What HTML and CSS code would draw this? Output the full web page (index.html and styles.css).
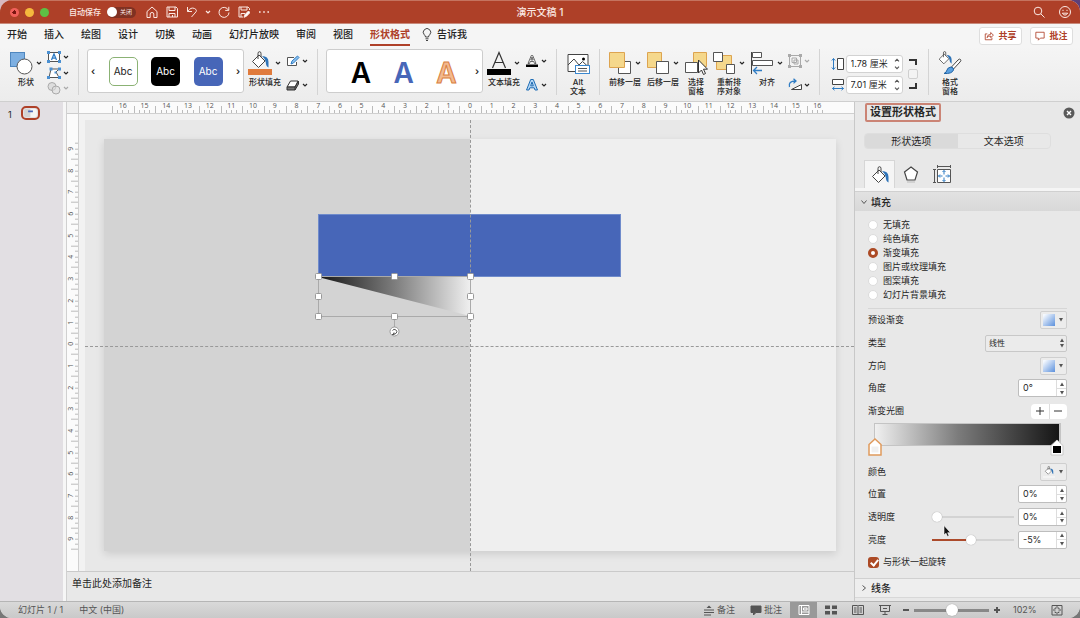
FILE: index.html
```html
<!DOCTYPE html>
<html lang="zh-CN">

<head>
  <meta charset="UTF-8">
  <meta name="viewport" content="width=device-width, initial-scale=1.0">
  <title>演示文稿 1</title>
  <link rel="stylesheet" href="styles.css">
</head>

<body>
  <!-- 公用图标 -->
  <svg class="sprite" aria-hidden="true">
    <symbol id="chev" viewBox="0 0 8 8"><path d="M2 3l2 2 2-2" fill="none" stroke="currentColor" stroke-width="1.2" /></symbol>
    <symbol id="up" viewBox="0 0 6 4"><path d="M1 4l2-3.500L5 4z" fill="currentColor" /></symbol>
    <symbol id="down" viewBox="0 0 6 4"><path d="M1 0l2 3.500L5 0z" fill="currentColor" /></symbol>
    <symbol id="cup" viewBox="0 0 6 4"><path d="M1 3.4l2-2 2 2" fill="none" stroke="currentColor" stroke-width="1.1" /></symbol>
    <symbol id="cdown" viewBox="0 0 6 4"><path d="M1 .6l2 2 2-2" fill="none" stroke="currentColor" stroke-width="1.1" /></symbol>
    <symbol id="bucket" viewBox="0 0 18 18">
      <path d="M1.500 10.500L8 4l6 6-6.500 6.500z" fill="#fff" stroke="#444" />
      <path d="M7 8V2.500q0-1.800 1.500-1.800T10 2.500V6" fill="none" stroke="#444" />
      <path d="M11 5q6.500 0 6.500 6v5.500q-2.500-1-2.800-5.500-.7-3.500-3.700-6z" fill="#2f74b8" />
    </symbol>
    <symbol id="gradfill" viewBox="0 0 12 12"><rect width="12" height="12" fill="url(#blueGrad)" /></symbol>
    <linearGradient id="blueGrad" x1="0" y1="0" x2="1" y2="1">
      <stop offset=".1" stop-color="#f4f8fe" /><stop offset="1" stop-color="#5b90dc" />
    </linearGradient>
    <linearGradient id="shapeGrad">
      <stop offset="0" stop-color="#151515" /><stop offset=".5" stop-color="#7c7c7c" /><stop offset="1" stop-color="#efefef" />
    </linearGradient>
  </svg>

  <div class="window">
    <header class="titlebar">
      <div class="title-left">
        <div class="lights"><i class="red"></i><i class="yellow"></i><i class="green"></i></div>
        <span class="autosave">自动保存</span>
        <button class="toggle" aria-label="自动保存"><i></i>关闭</button>
        <svg class="t-icon" viewBox="0 0 12 12"><path d="M1 5.500L6 1l5 4.500V11.500H7.800V8Q7.800 6.500 6 6.500T4.200 8v3.500H1z" /></svg>
        <svg class="t-icon" viewBox="0 0 12 12"><path d="M1 1h9l1.500 1.500V11H1zM3 1v3.500h6V1M3 11V7.500h6V11M6.500 9v2" /></svg>
        <svg class="t-icon" viewBox="0 0 12 12"><path d="M1.500 1v4.500H6M1.500 5.500Q5 .8 8.500 2.500T9 7L5.500 11" /></svg>
        <svg class="t-chev"><use href="#chev" /></svg>
        <svg class="t-icon" viewBox="0 0 12 12"><path d="M10.500 4.200A5 5 0 1 0 11 6.500M10.800.8v3.600H7.200" /></svg>
        <svg class="t-icon" viewBox="0 0 12 12"><path d="M5 11H1V1h9l1.500 1.500V4M3 1v3h6V1M3 11V7.500h4" /><path d="M6 11.300L7 8.500l3.500-3.500 1.500 1.500L8.500 10.200z" fill="#fff" /></svg>
        <svg class="t-icon" viewBox="0 0 12 12"><path d="M1 6h1.600M5.200 6h1.600M9.400 6H11" stroke-width="1.600" /></svg>
      </div>
      <h1>演示文稿 1</h1>
      <div class="title-right">
        <svg class="t-icon" viewBox="0 0 12 12"><circle cx="5" cy="5" r="3.800" /><path d="M7.800 7.800L11.500 11.500" /></svg>
        <svg class="t-icon" viewBox="0 0 12 12"><circle cx="6" cy="6" r="5.500" /><path d="M3.300 7.200Q6 11 8.700 7.200zM4 3.800v1.200M8 3.800v1.200" /></svg>
      </div>
    </header>

    <nav class="tabs">
      <a href="#">开始</a>
      <a href="#">插入</a>
      <a href="#">绘图</a>
      <a href="#">设计</a>
      <a href="#">切换</a>
      <a href="#">动画</a>
      <a href="#">幻灯片放映</a>
      <a href="#">审阅</a>
      <a href="#">视图</a>
      <a href="#" class="active">形状格式</a>
      <a href="#" class="tell"><svg viewBox="0 0 10 13"><path d="M3.500 9Q3.500 7.800 2.300 6.800A3.700 3.700 0 1 1 7.700 6.800Q6.500 7.800 6.500 9zM3.500 10.800h3M4 12.500h2" /></svg>告诉我</a>
      <div class="tab-actions">
        <button><svg viewBox="0 0 12 12"><path d="M4 3.500H1.500v7h8V8M3.500 8Q4 4 8 4V1.800L11.300 5 8 8V6Q5 6 3.500 8z" /></svg>共享</button>
        <button><svg viewBox="0 0 12 12"><path d="M1 1.500h10v7H6.500L4 11V8.500H1z" /></svg>批注</button>
      </div>
    </nav>

    <div class="ribbon">
      <button class="tool">
        <span class="pic"><svg viewBox="0 0 24 24"><rect x="1.500" y="1.500" width="14" height="14" fill="#7eb0e2" stroke="#4f87bf" /><circle cx="15.500" cy="15.500" r="7.500" fill="#fff" stroke="#555" /></svg><svg class="chev"><use href="#chev" /></svg></span>
        <span>形状</span>
      </button>
      <div class="stack three">
        <button aria-label="文本框"><svg viewBox="0 0 14 14"><rect x="1.500" y="2.500" width="11" height="9" fill="#fff" stroke="#555" /><path d="M4.500 10L7 4l2.500 6M5.500 8.200h3" fill="none" stroke="#2f7cc4" stroke-width="1.300" /><path d="M0 1h3v3H0zM11 1h3v3h-3zM0 10h3v3H0zM11 10h3v3h-3z" fill="#4a90d2" /></svg><svg class="chev"><use href="#chev" /></svg></button>
        <button aria-label="编辑形状"><svg viewBox="0 0 14 14"><path d="M4 3h8L9 6l3 5.500H2z" fill="#fff" stroke="#555" /><path d="M2.500 1.500h3v3h-3zM11 1.500h3v3h-3zM0 10h3v3H0zM11 10h3v3h-3zM7.500 5.500h2v2h-2z" fill="#4a90d2" /></svg><svg class="chev"><use href="#chev" /></svg></button>
        <button class="off" aria-label="合并形状" disabled><svg viewBox="0 0 14 14"><circle cx="5" cy="5.500" r="4" fill="#ddd" stroke="#aaa" /><circle cx="9" cy="9" r="4" fill="#ddd" fill-opacity=".6" stroke="#aaa" /></svg><svg class="chev"><use href="#chev" /></svg></button>
      </div>
      <i class="divider"></i>

      <div class="gallery">
        <button class="arrow" aria-label="上一个">‹</button>
        <button class="style-tile outline">Abc</button>
        <button class="style-tile black">Abc</button>
        <button class="style-tile blue">Abc</button>
        <button class="arrow" aria-label="下一个">›</button>
      </div>
      <button class="tool">
        <span class="pic"><svg viewBox="0 0 24 24"><use href="#bucket" x="3" y="0" width="18" height="18" /><path d="M0 18h24v6H0z" fill="#e07b3c" /></svg><svg class="chev"><use href="#chev" /></svg></span>
        <span>形状填充</span>
      </button>
      <div class="stack">
        <button aria-label="形状轮廓"><svg viewBox="0 0 14 14"><path d="M8 3.500H1.500v8h9V8" fill="#fff" stroke="#555" /><path d="M5 10l1-3 5.500-5L13 3.500 7.500 9z" fill="#8cc1ee" stroke="#2f7cc4" /></svg><svg class="chev"><use href="#chev" /></svg></button>
        <button aria-label="形状效果"><svg viewBox="0 0 14 14"><path d="M1 9l3.500-6H12L9 9z" fill="#fff" stroke="#333" /><path d="M1 9v3h8l3.500-6V3L9 9H1M9 9v3" fill="#777" stroke="#333" /></svg><svg class="chev"><use href="#chev" /></svg></button>
      </div>
      <i class="divider"></i>

      <div class="gallery wordart">
        <button class="wa">A</button>
        <button class="wa wa-blue">A</button>
        <button class="wa wa-orange">A</button>
        <button class="arrow" aria-label="下一个">›</button>
      </div>
      <button class="tool">
        <span class="pic"><svg viewBox="0 0 24 24"><path d="M5.500 17L12 1.500 18.500 17M8 11.500h8" fill="none" stroke="#333" stroke-width="1.200" /><path d="M0 18h24v6H0z" /></svg><svg class="chev"><use href="#chev" /></svg></span>
        <span>文本填充</span>
      </button>
      <div class="stack">
        <button aria-label="文本轮廓"><svg viewBox="0 0 14 14"><path d="M3 9.500L6.300 1.500h1.400L11 9.500H9.500L8.800 7.500H5.200l-.7 2zM5.800 6h2.400L7 3z" fill="#fff" stroke="#444" stroke-width=".8" /><path d="M1 10.500h12v2.500H1z" /></svg><svg class="chev"><use href="#chev" /></svg></button>
        <button aria-label="文字效果"><svg viewBox="0 0 14 14"><path d="M1.500 12L5.700 1.500h2.600L12.500 12H10L9.200 9.800H4.800L4 12zM5.700 7.800h2.600L7 4z" fill="#b5d7f5" stroke="#1f6db5" /></svg><svg class="chev"><use href="#chev" /></svg></button>
      </div>
      <i class="divider"></i>

      <button class="tool narrow">
        <span class="pic"><svg viewBox="0 0 24 24"><path d="M2 3.500h20v17H2z" fill="#fff" stroke="#444" /><path d="M2 14l6-6 5 6 3.500-3.500 5.500 5" fill="none" stroke="#444" /><circle cx="17.500" cy="8" r="1.500" /><rect x="9.500" y="14.500" width="14" height="8" fill="#fff" stroke="#3b88cf" /><path d="M12 17.500h9M12 20h9" stroke="#555" /></svg></span>
        <span>Alt<br>文本</span>
      </button>
      <i class="divider"></i>

      <button class="tool">
        <span class="pic"><svg viewBox="0 0 24 24"><path d="M10.500 10.500h12v12h-12z" fill="#fff" stroke="#555" /><path d="M1.500 1.500h15v15h-15z" fill="#f5d88c" stroke="#dda450" /></svg><svg class="chev"><use href="#chev" /></svg></span>
        <span>前移一层</span>
      </button>
      <button class="tool">
        <span class="pic"><svg viewBox="0 0 24 24"><path d="M1.500 1.500h14v15h-14z" fill="#f5d88c" stroke="#dda450" /><path d="M10.500 10.500h12v12h-12z" fill="#fff" stroke="#555" /></svg><svg class="chev"><use href="#chev" /></svg></span>
        <span>后移一层</span>
      </button>
      <button class="tool slim">
        <span class="pic"><svg viewBox="0 0 24 24"><path d="M9.500 1.500h13v14h-13z" fill="#f5d88c" stroke="#dda450" /><path d="M1.500 11.500h12v10h-12z" fill="#fff" stroke="#555" /><path d="M14.500 9v13l3-3 2 4.500 2-1-2-4.300h4z" fill="#fff" stroke="#333" /></svg></span>
        <span>选择<br>窗格</span>
      </button>
      <button class="tool">
        <span class="pic"><svg viewBox="0 0 24 24"><path d="M4.500 4.500h15v14h-15z" fill="#f5d88c" stroke="#dda450" /><path d="M1.500 1.500h9v9h-9zM14.500 13.500h8v9h-8z" fill="#fff" stroke="#555" /></svg><svg class="chev"><use href="#chev" /></svg></span>
        <span>重新排<br>序对象</span>
      </button>
      <button class="tool">
        <span class="pic"><svg viewBox="0 0 24 24"><path d="M1.500 1v22" stroke="#444" /><path d="M2.500 1.500h9v5h-9zM2.500 9.500h20v5h-20z" fill="#fff" stroke="#555" /><path d="M12 19.500H3.500M7 16l-3.500 3.500L7 23" fill="none" stroke="#2f7cc4" stroke-width="1.300" /></svg><svg class="chev"><use href="#chev" /></svg></span>
        <span>对齐</span>
      </button>
      <div class="stack">
        <button class="off" aria-label="组合" disabled><svg viewBox="0 0 14 14"><path d="M1.500 1.500h11v11h-11zM4 4h4.500v4.500H4zM6 6h4v4H6z" fill="none" stroke="#aaa" /><path d="M0 0h3v3H0zM11 0h3v3h-3zM0 11h3v3H0zM11 11h3v3h-3z" fill="#aaa" /></svg><svg class="chev"><use href="#chev" /></svg></button>
        <button aria-label="旋转"><svg viewBox="0 0 14 14"><path d="M3.500 11.500h10v-5z" fill="#fff" stroke="#444" /><path d="M1.500 9Q0 3 7.500 3M5.500.8L8 3 5.500 5.400" fill="none" stroke="#2f7cc4" stroke-width="1.300" /></svg><svg class="chev"><use href="#chev" /></svg></button>
      </div>
      <i class="divider"></i>

      <div class="size">
        <div class="size-fields">
          <label for="shapeH" aria-label="高度"><svg viewBox="0 0 14 14"><path d="M6.500 1.500h6v11h-6z" fill="#fff" stroke="#444" /><path d="M2.500 1.500v11M.8 3.500l1.700-2 1.700 2M.8 10.500l1.700 2 1.700-2" fill="none" stroke="#2f7cc4" /></svg></label>
          <div class="size-box"><input id="shapeH" type="text" value="1.78 厘米"><span class="steps"><button aria-label="增加"><svg><use href="#cup" /></svg></button><button aria-label="减少"><svg><use href="#cdown" /></svg></button></span></div>
          <label for="shapeW" aria-label="宽度"><svg viewBox="0 0 14 14"><path d="M1.500 1.500h11v5h-11z" fill="#fff" stroke="#444" /><path d="M1.500 10.500h11M3.500 8.800l-2 1.700 2 1.700M10.500 8.800l2 1.700-2 1.700" fill="none" stroke="#2f7cc4" /></svg></label>
          <div class="size-box"><input id="shapeW" type="text" value="7.01 厘米"><span class="steps"><button aria-label="增加"><svg><use href="#cup" /></svg></button><button aria-label="减少"><svg><use href="#cdown" /></svg></button></span></div>
        </div>
        <div class="lock">
          <svg viewBox="0 0 8 6"><path d="M0 1h7v5" /></svg>
          <input type="checkbox" aria-label="锁定纵横比">
          <svg viewBox="0 0 8 6"><path d="M0 5h7V0" /></svg>
        </div>
      </div>
      <i class="divider"></i>

      <button class="tool narrow">
        <span class="pic"><svg viewBox="0 0 24 24"><use href="#bucket" x="0" y="0" width="14" height="14" /><path d="M22.500 8.500q1 1-.5 2.500l-6.500 7-2-2L20 9q1.500-1.500 2.500-.5z" fill="#fff" stroke="#444" /><path d="M13 16q3 .5 2.500 3-1.500 4-9.500 3.500 2.500-1 3-3.500T13 16z" fill="#5aa0e0" stroke="#2465a5" /></svg></span>
        <span>格式<br>窗格</span>
      </button>
    </div>

    <main class="body">
      <aside class="thumbs">
        <span>1</span>
        <button class="thumb" aria-label="幻灯片 1"><svg viewBox="0 0 16 10"><path d="M0 0h8v10H0z" fill="#d3d3d3" /><path d="M8 0h8v10H8z" fill="#f5f5f5" /><path d="M5 2h6v2H5z" fill="#4766b8" /></svg></button>
      </aside>

      <section class="editor">
        <div class="workspace">
          <div class="corner"></div>
          <div class="ruler-h">
            <span>16</span><span>15</span><span>14</span><span>13</span><span>12</span><span>11</span><span>10</span><span>9</span><span>8</span><span>7</span><span>6</span><span>5</span><span>4</span><span>3</span><span>2</span><span>1</span><span>0</span><span>1</span><span>2</span><span>3</span><span>4</span><span>5</span><span>6</span><span>7</span><span>8</span><span>9</span><span>10</span><span>11</span><span>12</span><span>13</span><span>14</span><span>15</span><span>16</span>
          </div>
          <div class="ruler-v">
            <span>9</span><span>8</span><span>7</span><span>6</span><span>5</span><span>4</span><span>3</span><span>2</span><span>1</span><span>0</span><span>1</span><span>2</span><span>3</span><span>4</span><span>5</span><span>6</span><span>7</span><span>8</span><span>9</span>
          </div>
          <div class="stage">
            <div class="canvas">
              <div class="slide">
                <svg viewBox="0 0 732 412">
                  <rect x="214.500" y="75.500" width="302" height="62" fill="#4766b8" stroke="#6f8bcb" />
                  <path d="M214 138h152v39z" fill="url(#shapeGrad)" />
                </svg>
              </div>
              <i class="guide-v"></i>
              <i class="guide-h"></i>
              <!-- 选中框 -->
              <div class="overlay">
                <svg viewBox="0 0 732 412">
                  <path d="M214.500 137.500h152v40h-152zM290.500 177v12" fill="none" stroke="#aaa" />
                  <g fill="#fff" stroke="#999">
                    <rect x="211.500" y="134.500" width="6" height="6" rx="1" /><rect x="287.500" y="134.500" width="6" height="6" rx="1" /><rect x="363.500" y="134.500" width="6" height="6" rx="1" />
                    <rect x="211.500" y="154.500" width="6" height="6" rx="1" /><rect x="363.500" y="154.500" width="6" height="6" rx="1" />
                    <rect x="211.500" y="174.500" width="6" height="6" rx="1" /><rect x="287.500" y="174.500" width="6" height="6" rx="1" /><rect x="363.500" y="174.500" width="6" height="6" rx="1" />
                    <circle cx="290.500" cy="192.500" r="4.500" />
                  </g>
                  <path d="M288.500 191.500a2.300 2.300 0 1 1 .5 3M288 195.500h2v-2" fill="none" stroke="#555" />
                </svg>
              </div>
            </div>
          </div>
        </div>
        <div class="notes">单击此处添加备注</div>
      </section>

      <aside class="pane">
        <div class="pane-title">
          <h2>设置形状格式</h2>
          <button class="close" aria-label="关闭"><svg viewBox="0 0 12 12"><circle cx="6" cy="6" r="5.500" fill="#5a5a5a" /><path d="M4 4l4 4M8 4L4 8" stroke="#fff" stroke-width="1.400" /></svg></button>
        </div>
        <div class="segments">
          <button class="on">形状选项</button>
          <button>文本选项</button>
        </div>
        <div class="pane-tabs">
          <button class="on" aria-label="填充与线条"><svg viewBox="0 0 18 18"><use href="#bucket" width="18" height="18" /></svg></button>
          <button aria-label="效果"><svg viewBox="0 0 18 18"><path d="M9 2l6.500 5L13 15H5L2.500 7z" fill="#fff" stroke="#444" stroke-width="1.200" /><path d="M5 17h8" stroke="#bbb" /></svg></button>
          <button aria-label="大小与属性"><svg viewBox="0 0 18 18"><path d="M4.500 4.500h13v13h-13z" fill="#fff" stroke="#555" /><path d="M4.500 1.500h13M4.500 0v3M17.500 0v3M1.500 4.500v13M0 4.500h3M0 17.500h3" stroke="#555" /><path d="M11 5.500v4M11 12.500v4M5.500 11h4M12.500 11h4M9.500 7L11 5.500 12.500 7M9.500 15l1.500 1.500 1.500-1.500M7 9.500L5.500 11 7 12.500M15 9.500l1.500 1.500-1.500 1.500" fill="none" stroke="#2f7cc4" /></svg></button>
        </div>

        <button class="section-head fill-head"><svg viewBox="0 0 8 8"><path d="M1.500 2.500L4 5.500l2.500-3" /></svg>填充</button>
        <div class="fill-body">
          <div class="radios">
            <label><input type="radio" name="fill">无填充</label>
            <label><input type="radio" name="fill">纯色填充</label>
            <label><input type="radio" name="fill" checked>渐变填充</label>
            <label><input type="radio" name="fill">图片或纹理填充</label>
            <label><input type="radio" name="fill">图案填充</label>
            <label><input type="radio" name="fill">幻灯片背景填充</label>
          </div>
          <div class="rows five">
            <div class="row"><span>预设渐变</span><button class="swatch" aria-label="预设渐变"><svg viewBox="0 0 12 12"><use href="#gradfill" /></svg><svg class="tri"><use href="#down" /></svg></button></div>
            <div class="row"><label for="gradType">类型</label><span class="select"><select id="gradType"><option>线性</option></select><span class="select-arrows"><svg class="tri"><use href="#up" /></svg><svg class="tri"><use href="#down" /></svg></span></span></div>
            <div class="row"><span>方向</span><button class="swatch" aria-label="方向"><svg viewBox="0 0 12 12"><use href="#gradfill" /></svg><svg class="tri"><use href="#down" /></svg></button></div>
            <div class="row"><label for="angle">角度</label><div class="spin"><input id="angle" type="text" value="0°"><span class="steps"><button aria-label="增加"><svg><use href="#up" /></svg></button><button aria-label="减少"><svg><use href="#down" /></svg></button></span></div></div>
            <div class="row"><span>渐变光圈</span><div class="plusminus"><button aria-label="添加光圈"><svg viewBox="0 0 8 8"><path d="M0 4h8M4 0v8" /></svg></button><button aria-label="删除光圈"><svg viewBox="0 0 8 8"><path d="M0 4h8" /></svg></button></div></div>
          </div>
          <div class="gradient">
            <div class="bar"></div>
            <svg class="stop first" viewBox="0 0 14 18"><path d="M1 6.500L7 1l6 5.500V17H1z" fill="#fff" stroke="#e09a5c" stroke-width="1.500" /><path d="M3.500 8.500h7v6h-7z" fill="#f0f0f0" /></svg>
            <svg class="stop last" viewBox="0 0 14 18"><path d="M1 7.500L7 2l6 5.500V17H1z" fill="#fff" stroke="#c8c8c8" /><path d="M3 8h8v7H3z" /></svg>
          </div>
          <div class="rows four">
            <div class="row"><span>颜色</span><button class="swatch" aria-label="颜色"><svg viewBox="0 0 12 12"><use href="#bucket" x="1" width="10" height="9" /><path d="M0 10h12v2H0z" fill="#f4f4f4" /></svg><svg class="tri"><use href="#down" /></svg></button></div>
            <div class="row"><label for="pos">位置</label><div class="spin"><input id="pos" type="text" value="0%"><span class="steps"><button aria-label="增加"><svg><use href="#up" /></svg></button><button aria-label="减少"><svg><use href="#down" /></svg></button></span></div></div>
            <div class="row"><label for="alpha">透明度</label><input class="slider" type="range" min="0" max="100" value="0" aria-label="透明度"><div class="spin"><input id="alpha" type="text" value="0%"><span class="steps"><button aria-label="增加"><svg><use href="#up" /></svg></button><button aria-label="减少"><svg><use href="#down" /></svg></button></span></div>
              <svg class="cursor" viewBox="0 0 8 12"><path d="M1 .5v9.500l2-1.800 1.500 3.300 1.500-.7L4.700 7.700h2.800z" fill="#111" stroke="#fff" stroke-width=".6" /></svg>
            </div>
            <div class="row"><label for="light">亮度</label><input class="slider light" type="range" min="-100" max="100" value="-5" aria-label="亮度"><div class="spin"><input id="light" type="text" value="-5%"><span class="steps"><button aria-label="增加"><svg><use href="#up" /></svg></button><button aria-label="减少"><svg><use href="#down" /></svg></button></span></div></div>
          </div>
          <label class="check"><input type="checkbox" checked>与形状一起旋转</label>
        </div>
        <button class="section-head line-head"><svg viewBox="0 0 8 8"><path d="M2.500 1.500L5.500 4l-3 2.500" /></svg>线条</button>
      </aside>
    </main>

    <footer class="status">
      <span>幻灯片 1 / 1</span>
      <span>中文 (中国)</span>
      <div class="status-right">
        <button class="text"><svg viewBox="0 0 12 12"><path d="M1 6h10M1 8.500h10M1 11h7" /><path d="M3.500 4L6 1.500 8.500 4z" fill="#555" stroke="none" /></svg>备注</button>
        <button class="text"><svg viewBox="0 0 12 12"><path d="M1 2h10v6.500H6L3.500 11V8.500H1z" fill="#555" /></svg>批注</button>
        <button class="view on" aria-label="普通视图"><svg viewBox="0 0 12 12"><path d="M1 1.500h10v9H1zM3.500 1.500v9M3.500 8h7.500M5.500 4h3.500v2H5.500z" /></svg></button>
        <button class="view" aria-label="幻灯片浏览"><svg viewBox="0 0 12 12"><path d="M0 1.500h5v3.500H0zM7 1.500h5v3.500H7zM0 7h5v3.500H0zM7 7h5v3.500H7z" fill="#555" stroke="none" /></svg></button>
        <button class="view" aria-label="阅读视图"><svg viewBox="0 0 12 12"><path d="M.5 1.500h5l.5.5.5-.5h5v9H.5zM6 2v8.500M2 4h2.500M2 6h2.500M2 8h2.500M7.500 4H10M7.500 6H10M7.500 8H10" /></svg></button>
        <button class="view" aria-label="幻灯片放映"><svg viewBox="0 0 12 12"><path d="M0 1.500h12M1.500 1.500v6h9v-6M6 7.500v3M3.500 10.500h5M4 4.500h4" /></svg></button>
        <button class="zoom-btn" aria-label="缩小"><svg viewBox="0 0 8 8"><path d="M1 4h6" /></svg></button>
        <input class="zoom" type="range" min="10" max="190" value="102" aria-label="缩放">
        <button class="zoom-btn" aria-label="放大"><svg viewBox="0 0 8 8"><path d="M1 4h6M4 1v6" /></svg></button>
        <span class="percent">102%</span>
        <button class="view" aria-label="适应窗口"><svg viewBox="0 0 12 12"><path d="M1 1.500h10v9.500H1zM6 2v2.500M6 8v2.500M2 6h2.500M7.500 6H10M4.500 3.500v1h-1M7.500 3.500v1h1M4.500 9V8h-1M7.500 9V8h1" /></svg></button>
      </div>
    </footer>
  </div>
</body>

</html>
```

FILE: styles.css
```css
* {
  box-sizing: border-box;
}

body {
  margin: 0;
  height: 100vh;
  background: linear-gradient(transparent 50%, #777 50%), linear-gradient(90deg, #d9b9c0, #5d3f78);
  font-family: Inter, "Noto Sans CJK SC", sans-serif;
  font-size: 9px;
  line-height: 12px;
  color: #262626;
}

button,
input,
select {
  margin: 0;
  padding: 0;
  border: none;
  background: none;
  font: inherit;
  color: inherit;
}

svg {
  display: block;
  flex: none;
}

.sprite {
  position: absolute;
  width: 0;
  height: 0;
}

.window {
  display: flex;
  flex-direction: column;
  height: 100%;
  border-radius: 12px;
  overflow: hidden;
  background: #e8e8e8;
}

/* 标题栏 */
.titlebar {
  display: grid;
  grid-template-columns: 1fr auto 1fr;
  align-items: center;
  height: 24px;
  flex: none;
  background: #ae4028;
  border-top: 1px solid #c5735f;
  border-bottom: 1px solid #c88a7b;
  color: #fbe9e4;
}

.titlebar h1 {
  margin: 0;
  font-size: 10px;
  font-weight: 500;
}

.title-left,
.title-right {
  display: flex;
  align-items: center;
  gap: 8px;
}

.title-left {
  padding-left: 10px;
}

.title-right {
  justify-content: flex-end;
  gap: 14px;
  padding-right: 9px;
}

.lights {
  display: flex;
  gap: 6px;
  margin-right: 12px;
}

.lights i {
  width: 9px;
  height: 9px;
  border-radius: 50%;
}

.red {
  background: radial-gradient(circle, #7a1510 2px, #f0605a 2px);
}

.yellow {
  background: #f5b83d;
}

.green {
  background: #5dc044;
}

.autosave {
  font-size: 8px;
  font-weight: 500;
}

.toggle {
  display: flex;
  align-items: center;
  gap: 3px;
  width: 29px;
  height: 11px;
  margin: 0 2px 0 -2px;
  border-radius: 6px;
  background: #7f3122;
  font-size: 6px;
}

.toggle i {
  width: 10px;
  height: 10px;
  border-radius: 50%;
  background: #fff;
}

.t-icon {
  width: 12px;
  height: 12px;
  fill: none;
  stroke: #fbe9e4;
}

.t-chev {
  width: 8px;
  height: 8px;
  margin: 0 -2px;
}

/* 选项卡 */
.tabs {
  display: flex;
  align-items: center;
  gap: 17px;
  height: 22px;
  flex: none;
  padding: 0 7px;
  background: #f5f5f5;
  font-size: 10px;
  font-weight: 500;
}

.tabs a {
  padding: 2px 0;
  border-bottom: 2px solid transparent;
  line-height: 15px;
  color: #222;
  text-decoration: none;
}

.tabs a.active {
  border-color: #ae4028;
  font-weight: 700;
  color: #ae4028;
}

.tabs .tell {
  display: flex;
  align-items: center;
  gap: 5px;
  margin-left: -5px;
}

.tell svg {
  width: 10px;
  height: 13px;
  fill: none;
  stroke: #444;
}

.tab-actions {
  display: flex;
  gap: 8px;
  margin-left: auto;
}

.tab-actions button {
  display: flex;
  align-items: center;
  justify-content: center;
  gap: 4px;
  width: 43px;
  height: 18px;
  margin-top: 2px;
  border: 1px solid #dedede;
  border-radius: 3px;
  background: #fff;
  font-size: 9px;
  font-weight: 700;
  color: #ae4028;
}

.tab-actions svg {
  width: 10px;
  height: 10px;
  fill: none;
  stroke: #ae4028;
}

/* 功能区 */
.ribbon {
  display: flex;
  gap: 4px;
  height: 56px;
  flex: none;
  padding: 3px 9px 0;
  background: linear-gradient(#f5f5f5, #ececec);
  border-bottom: 1px solid #cfcfcf;
}

.divider {
  width: 1px;
  height: 46px;
  margin: 0 4px;
  background: #d4d4d4;
}

.tool {
  display: flex;
  flex-direction: column;
  align-items: center;
  gap: 3px;
  width: 34px;
  padding-top: 2px;
  font-size: 8px;
  font-weight: 500;
  line-height: 9px;
  white-space: nowrap;
}

.tool.narrow {
  width: 26px;
}

.tool.slim {
  width: 24px;
}

.pic {
  display: flex;
  align-items: center;
  gap: 2px;
}

.pic svg {
  width: 24px;
  height: 24px;
}

.pic .chev,
.chev {
  width: 8px;
  height: 8px;
}

.stack {
  display: flex;
  flex-direction: column;
  justify-content: space-between;
  width: 23px;
  height: 46px;
  padding: 5px 0 3px;
}

.stack.three {
  padding: 1px 0 0;
}

.stack button {
  display: flex;
  align-items: center;
  gap: 1px;
}

.stack button svg:first-child {
  width: 14px;
  height: 14px;
}

.off {
  color: #aaa;
}

.gallery {
  display: flex;
  align-items: center;
  justify-content: space-between;
  width: 157px;
  height: 44px;
  padding: 0 3px;
  border: 1px solid #cdcdcd;
  border-radius: 3px;
  background: #fff;
}

.arrow {
  width: 4px;
  font-size: 10px;
  font-weight: 600;
}

.style-tile {
  width: 29px;
  height: 29px;
  border-radius: 5px;
  font-size: 10px;
  color: #fff;
}

.style-tile.outline {
  border: 1px solid #8bb274;
  color: #222;
}

.style-tile.black {
  background: #000;
}

.style-tile.blue {
  background: #4766b8;
}

.wordart {
  padding-left: 20px;
}

.wa {
  width: 28px;
  padding-top: 4px;
  font-size: 28px;
  font-weight: 600;
  line-height: 36px;
  color: #000;
}

.wa-blue {
  color: #4766b8;
}

.wa-orange {
  color: #f3b98f;
  -webkit-text-stroke: 1px #d9803f;
}

.size {
  display: flex;
  align-items: center;
  justify-content: center;
  gap: 5px;
  width: 92px;
  height: 50px;
}

.size-fields {
  display: grid;
  grid-template-columns: 14px 57px;
  gap: 3px 1px;
  align-items: center;
}

.size-fields label svg {
  width: 14px;
  height: 14px;
}

.size-box {
  display: flex;
  height: 18px;
  border: 1px solid #d2d2d2;
  border-radius: 3px;
  background: #fff;
}

.size-box input,
.spin input {
  flex: 1;
  min-width: 0;
  padding-left: 4px;
}

.steps {
  display: flex;
  flex-direction: column;
  width: 10px;
}

.steps button {
  display: flex;
  flex: 1;
  align-items: center;
  justify-content: center;
}

.steps svg,
.tri {
  width: 6px;
  height: 4px;
  color: #555;
}

.lock {
  display: flex;
  flex-direction: column;
  align-items: center;
  gap: 4px;
}

.lock svg {
  width: 8px;
  height: 6px;
  fill: none;
  stroke: #333;
  stroke-width: 2;
}

.lock input {
  appearance: none;
  width: 10px;
  height: 10px;
  border: 1px solid #cfcfcf;
  border-radius: 2px;
  background: #f3f3f3;
}

/* 主体 */
.body {
  display: flex;
  flex: 1;
  min-height: 0;
}

.thumbs {
  display: flex;
  align-items: flex-start;
  gap: 8px;
  width: 66px;
  padding: 4px 0 0 8px;
  background: #e2dfe3;
  border-right: 3px solid #f6f6f6;
}

.thumbs span {
  width: 5px;
  padding-top: 3px;
}

.thumb {
  padding: 1px;
  border: 2px solid #ae4028;
  border-radius: 5px;
}

.thumb svg {
  width: 13px;
  height: 8px;
  border-radius: 2px;
}

.editor {
  display: flex;
  flex: 1;
  flex-direction: column;
  min-width: 0;
  border-left: 1px solid #d0d0d0;
}

.workspace {
  display: grid;
  grid-template: 12px minmax(0, 1fr) / 12px minmax(0, 1fr);
  flex: 1;
  min-height: 0;
}

.corner {
  background: #f0f0f0;
  border-right: 1px solid #ccc;
  border-bottom: 1px solid #ccc;
}

.ruler-h,
.ruler-v {
  display: flex;
  background: #fbfbfb;
  font-family: "Open Sans", sans-serif;
  font-size: 7px;
  line-height: 8px;
  color: #555;
}

.ruler-h {
  padding: 0 26px 0 33px;
  border-bottom: 1px solid #d0d0d0;
}

.ruler-v {
  flex-direction: column;
  padding: 24px 0 21px;
  border-right: 1px solid #d0d0d0;
}

.ruler-h span,
.ruler-v span {
  flex: 1;
  text-align: center;
  background-repeat: no-repeat;
  background-image: linear-gradient(#bbb, #bbb), linear-gradient(#bbb, #bbb), linear-gradient(#bbb, #bbb), linear-gradient(#bbb, #bbb);
}

.ruler-h span {
  background-size: 1px 7px, 1px 3px, 1px 3px, 1px 3px;
  background-position: 0 100%, 25% 100%, 50% 100%, 75% 100%;
}

.ruler-v span {
  writing-mode: vertical-rl;
  transform: rotate(180deg);
  background-size: 7px 1px, 3px 1px, 3px 1px, 3px 1px;
  background-position: 0 0, 0 25%, 0 50%, 0 75%;
}

.stage {
  display: flex;
  padding: 6px 0 0 6px;
  background: #f2f2f2;
}

.canvas {
  position: relative;
  display: flex;
  flex: 1;
  min-height: 0;
  padding: 19px 18px 20px 19px;
  background: #e8e8e8;
}

.slide {
  flex: 1;
  min-height: 0;
  background: linear-gradient(90deg, #d3d3d3 50%, #efefef 50%);
  box-shadow: 0 3px 8px rgba(0, 0, 0, .12);
}

.slide svg,
.overlay svg {
  width: 100%;
  height: 100%;
}

.overlay {
  position: absolute;
  inset: 19px 18px 20px 19px;
}

.guide-v {
  position: absolute;
  top: 0;
  bottom: 0;
  left: 50%;
  border-left: 1px dashed #999;
}

.guide-h {
  position: absolute;
  top: 50%;
  left: 0;
  right: 0;
  border-top: 1px dashed #999;
}

.notes {
  height: 30px;
  flex: none;
  padding: 5px;
  border-top: 1px solid #cacaca;
  font-size: 10px;
}

/* 格式窗格 */
.pane {
  display: flex;
  flex-direction: column;
  width: 226px;
  flex: none;
  border-left: 1px solid #c8c8c8;
}

.pane-title {
  display: flex;
  align-items: center;
  justify-content: space-between;
  padding: 1px 5px 0 10px;
}

.pane-title h2 {
  margin: 0;
  padding: 0 3px;
  border: 2px solid #cb8475;
  border-radius: 2px;
  font-size: 11px;
  font-weight: 700;
  line-height: 15px;
}

.close svg {
  width: 12px;
  height: 12px;
}

.segments {
  display: flex;
  height: 16px;
  margin: 11px 29px 0 9px;
  border: 1px solid #dedede;
  border-radius: 4px;
  overflow: hidden;
}

.segments button {
  flex: 1;
  font-size: 10px;
}

.segments .on {
  background: #dadada;
}

.pane-tabs {
  display: flex;
  margin-top: 11px;
  padding-left: 9px;
  border-bottom: 3px solid #f5f5f5;
}

.pane-tabs button {
  display: flex;
  align-items: center;
  justify-content: center;
  width: 31px;
  height: 28px;
}

.pane-tabs .on {
  border: 1px solid #d6d6d6;
  border-bottom: none;
  background: #f5f5f5;
}

.pane-tabs svg {
  width: 18px;
  height: 18px;
}

.section-head {
  display: flex;
  align-items: center;
  gap: 3px;
  height: 20px;
  flex: none;
  padding-left: 5px;
  font-size: 10px;
  font-weight: 500;
}

.section-head svg {
  width: 8px;
  height: 8px;
  fill: none;
  stroke: #555;
}

.fill-head {
  background: linear-gradient(#e2e2e2, #d8d8d8);
  border-top: 1px solid #d0d0d0;
}

.line-head {
  margin-bottom: 3px;
  background: #eee;
  border-top: 1px solid #d0d0d0;
  border-bottom: 1px solid #d8d8d8;
}

.fill-body {
  display: flex;
  flex: 1;
  flex-direction: column;
  padding: 7px 13px 10px;
}

.radios {
  padding-bottom: 6px;
  border-bottom: 1px solid #d6d6d6;
}

.radios label {
  display: flex;
  align-items: center;
  gap: 5px;
  height: 14px;
}

.radios input {
  appearance: none;
  width: 10px;
  height: 10px;
  border: 1px solid #dcdcdc;
  border-radius: 50%;
  background: #fff;
}

.radios input:checked {
  border: 3px solid #ac4a25;
}

.rows {
  display: flex;
  flex-direction: column;
}

.five {
  flex: 5 1 0;
}

.four {
  flex: 4 1 0;
}

.row {
  position: relative;
  display: flex;
  flex: 1;
  align-items: center;
  gap: 4px;
}

.row > :first-child {
  margin-right: auto;
}

.swatch {
  display: flex;
  align-items: center;
  justify-content: center;
  gap: 3px;
  width: 27px;
  height: 18px;
  border: 1px solid #cfcfcf;
  border-radius: 2px;
  background: #ececec;
}

.swatch svg:first-child {
  width: 12px;
  height: 12px;
}

.select {
  position: relative;
  width: 82px;
}

.select select {
  display: block;
  appearance: none;
  width: 100%;
  height: 17px;
  padding-left: 3px;
  border: 1px solid #c8c8c8;
  border-radius: 2px;
  background: #ebebeb;
  font-size: 8px;
}

.select-arrows {
  position: absolute;
  top: 3px;
  right: 2px;
  display: flex;
  flex-direction: column;
  gap: 2px;
  pointer-events: none;
}

.spin {
  display: flex;
  width: 49px;
  height: 18px;
  border: 1px solid #bdbdbd;
  border-radius: 2px;
  background: #fff;
}

.spin .steps {
  border-left: 1px solid #ddd;
}

.spin .steps button + button {
  border-top: 1px solid #ddd;
}

.plusminus {
  display: flex;
  width: 36px;
  height: 15px;
  border-radius: 4px;
  background: #fff;
}

.plusminus button {
  display: flex;
  flex: 1;
  align-items: center;
  justify-content: center;
}

.plusminus button + button {
  border-left: 1px solid #ddd;
}

.plusminus svg {
  width: 8px;
  height: 8px;
  stroke: #333;
}

.gradient {
  position: relative;
  height: 38px;
  flex: none;
  padding: 1px 6px 0;
}

.bar {
  height: 23px;
  border: 1px solid #c4c4c4;
  border-right-width: 2px;
  background: linear-gradient(90deg, #f0f0f0, #7c7c7c 45%, #151515);
}

.stop {
  position: absolute;
  top: 16px;
  width: 14px;
  height: 18px;
}

.stop.first {
  left: 0;
}

.stop.last {
  right: 3px;
}

.slider,
.zoom {
  appearance: none;
  width: 82px;
  height: 10px;
  background: linear-gradient(#d3d3d3, #d3d3d3) center / 100% 2px no-repeat;
}

.slider::-webkit-slider-thumb,
.zoom::-webkit-slider-thumb {
  appearance: none;
  width: 10px;
  height: 10px;
  border-radius: 50%;
  background: #fff;
  box-shadow: 0 0 1px rgba(0, 0, 0, .4);
}

.light {
  background-image: linear-gradient(90deg, #ac4a2b 47%, #d3d3d3 47%);
}

.cursor {
  position: absolute;
  left: 75px;
  bottom: -9px;
  width: 8px;
  height: 12px;
}

.check {
  display: flex;
  align-items: center;
  gap: 4px;
  margin-top: 5px;
}

.check input {
  appearance: none;
  width: 11px;
  height: 11px;
  border-radius: 3px;
  background: #ac4a25;
  position: relative;
}

.check input::after {
  content: "";
  position: absolute;
  left: 4px;
  top: 1px;
  width: 3px;
  height: 6px;
  border: solid #fff;
  border-width: 0 2px 2px 0;
  transform: rotate(40deg);
}

/* 状态栏 */
.status {
  display: flex;
  align-items: center;
  gap: 16px;
  height: 17px;
  flex: none;
  padding: 0 17px 0 18px;
  background: linear-gradient(#d9d9d9, #c9c9c9);
  border-top: 1px solid #b5b5b5;
  color: #555;
}

.status-right {
  display: flex;
  align-items: center;
  height: 100%;
  margin-left: auto;
}

.status svg {
  width: 12px;
  height: 12px;
  fill: none;
  stroke: #555;
}

.status .text {
  display: flex;
  align-items: center;
  gap: 2px;
  margin-right: 15px;
}

.status .text + .view {
  margin-left: -7px;
}

.view {
  display: flex;
  align-items: center;
  justify-content: center;
  width: 27px;
  height: 100%;
}

.view.on {
  background: #999;
}

.view.on svg {
  stroke: #fff;
}

.status .zoom-btn svg {
  width: 8px;
  height: 8px;
  stroke-width: 2;
}

.zoom-btn {
  margin: 0 4px;
}

.zoom {
  width: 75px;
  background: linear-gradient(#888, #888) center / 100% 3px no-repeat;
}

.zoom::-webkit-slider-thumb {
  width: 12px;
  height: 12px;
}

.percent {
  width: 24px;
  margin: 0 14px 0 8px;
}

.status .view:last-child {
  width: 12px;
}
```
